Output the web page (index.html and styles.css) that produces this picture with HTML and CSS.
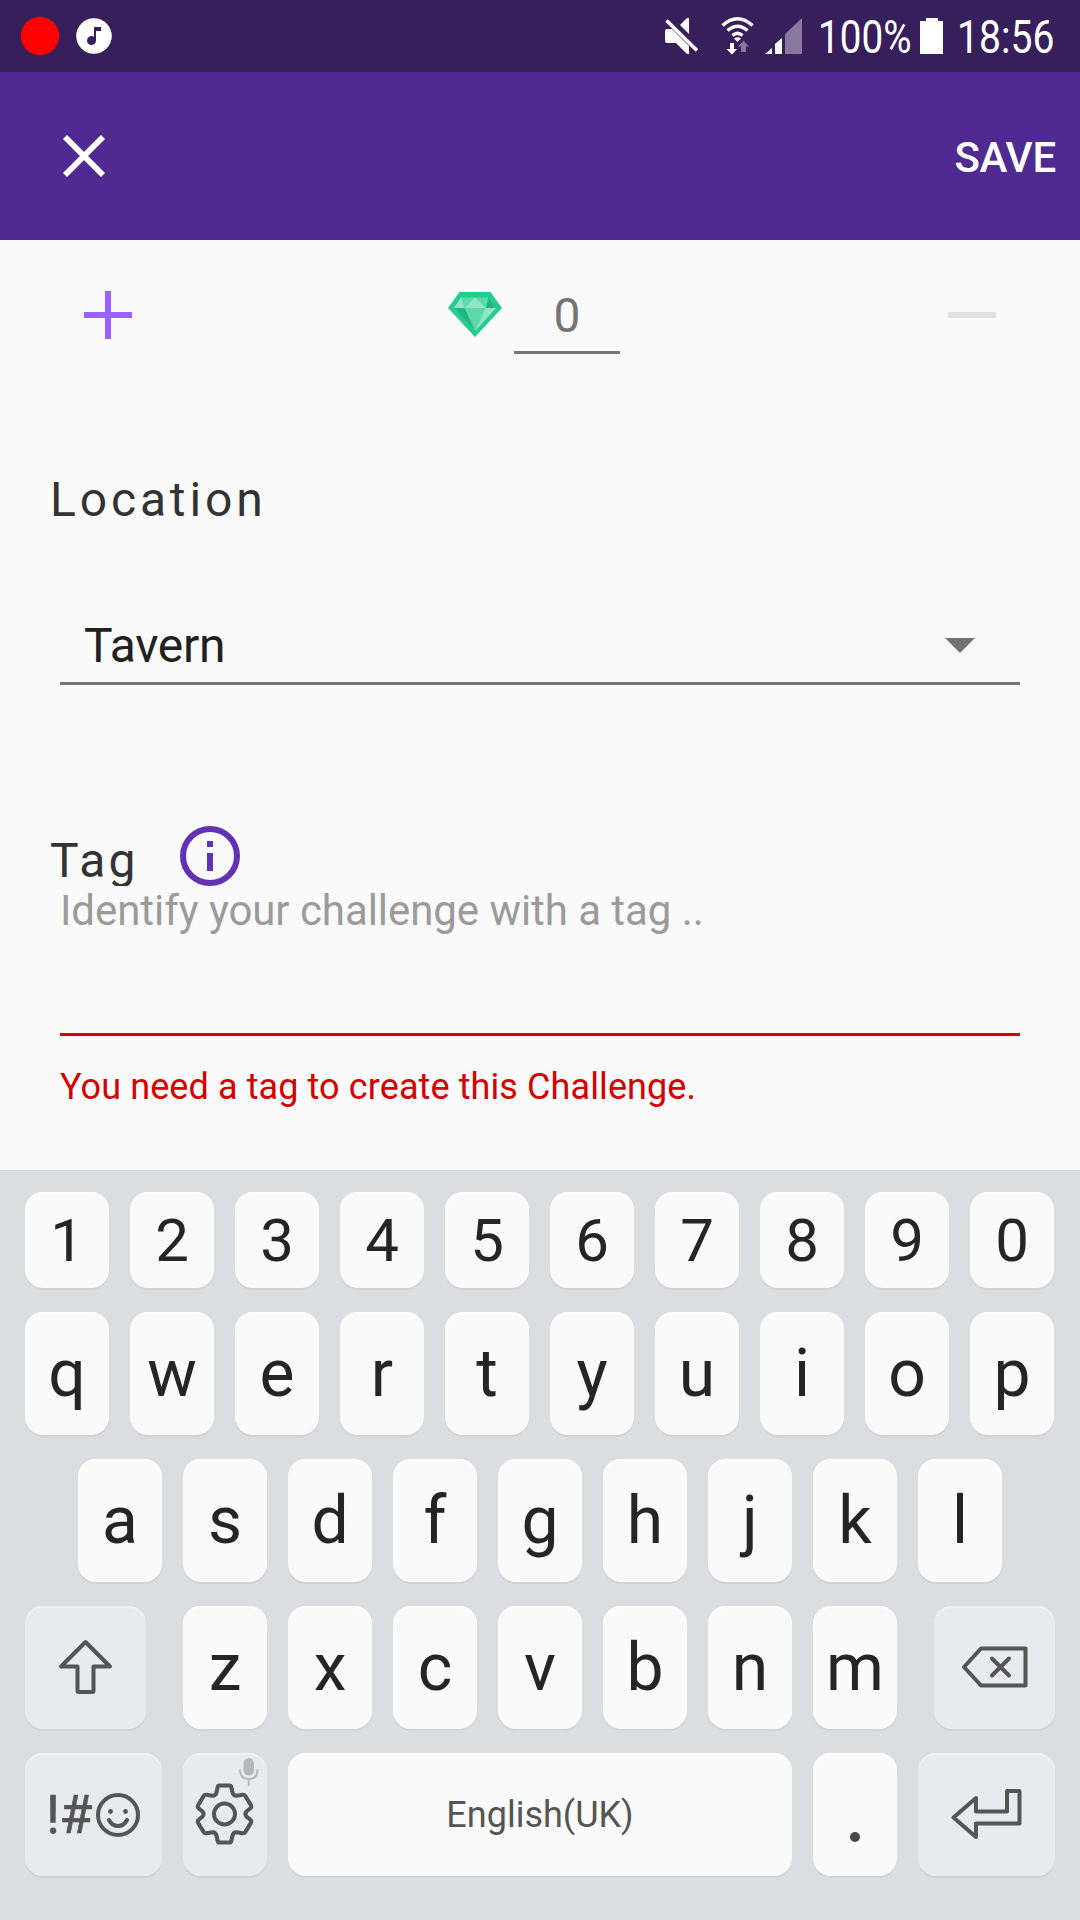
FILE: index.html
```html
<!DOCTYPE html>
<html lang="en">
<head>
<meta charset="utf-8">
<title>Create challenge</title>
<link rel="stylesheet" href="styles.css">
</head>
<body>
<header class="status">
  <svg class="status-left" viewBox="0 0 120 72" width="120" height="72">
    <circle cx="40" cy="36" r="19.2" fill="#f00"/>
    <circle cx="94" cy="36" r="17.8" fill="#fff"/>
    <path d="M94 27h7v4h-5v9.500a4.500 4.500 0 1 1-2-3.700z" fill="#371f5b"/>
  </svg>
  <svg class="status-icons" viewBox="660 0 150 72" width="150" height="72" fill="#fff">
    <path d="M665 31q0-2 2-2h5l17 17v8h-2l-11-11h-9q-2 0-2-2zM680 25l7-7h2v16z"/>
    <path d="M666.500 20.500 697 50.500" stroke="#fff" stroke-width="3.600"/>
    <g fill="none" stroke="#fff" stroke-width="3.400">
      <path d="M722.500 25.500q15-13.500 30 0M727.500 30.500q10-8.500 20 0M732.500 35.500q5-4.500 10 0"/>
    </g>
    <path d="M734 38.500q3.500-2.500 7 0l-3.500 3.500zM730 43h4v6h3l-5 5.500-5.500-5.500h3.500z"/>
    <path d="M741 52h5v-5.500h3l-5.500-5.700-5.500 5.700h3z" fill="#87799d"/>
    <path d="M765 54l7-6v6zM775 54V44l7-6v16z"/>
    <path d="M785 54V34l17-16v36z" fill="#87799d"/>
  </svg>
  <span class="pct"><span class="condensed">100%</span></span>
  <svg class="battery" viewBox="0 0 24 36" width="24" height="36"><path d="M6 0h12v3h5v33H0V3h6z" fill="#fff"/></svg>
  <span class="clock"><span class="condensed">18:56</span></span>
</header>

<nav class="appbar">
  <svg width="42" height="42" viewBox="0 0 42 42"><path d="M2 2l38 38M40 2 2 40" stroke="#fff" stroke-width="5.800"/></svg>
  <span class="save">SAVE</span>
</nav>

<main class="form">
  <section class="prize">
    <svg width="48" height="48" viewBox="0 0 48 48"><path d="M0 21h21V0h6v21h21v6H27v21h-6V27H0z" fill="#9b62ff"/></svg>
    <div class="amount">
      <svg class="gem" width="54" height="45" viewBox="0 0 54 45">
        <path d="M11.500 0h31L54 16 27 45 0 16z" fill="#24cc8f"/>
        <path d="M13 5.500h27.500L48 16 27 39 6 16z" fill="#5bd9ab"/>
        <path d="M13 5.500 6 16h10.500zM27 5.500 16.500 16H38z" fill="#92e5c8"/>
        <path d="M40.500 5.500 48 16H38z" fill="#1fb781"/>
        <path d="M6 16h10.500L27 39z" fill="#1fb781"/>
        <path d="M48 16H38L27 39z" fill="#92e5c8"/>
      </svg>
      <span class="amount-value">0</span>
    </div>
    <svg width="48" height="48" viewBox="0 0 48 48"><path d="M0 21h48v6H0z" fill="#e1e1e3"/></svg>
  </section>

  <h2 class="label location-label">Location</h2>
  <div class="select">
    <span>Tavern</span>
    <svg width="30" height="15" viewBox="0 0 30 15"><path d="M0 0h30L15 15z" fill="#737373"/></svg>
  </div>

  <div class="tag-head">
    <h2 class="label tag-label">Tag</h2>
    <svg width="60" height="60" viewBox="0 0 60 60" fill="#6133b4"><circle cx="30" cy="30" r="27" fill="none" stroke="#6133b4" stroke-width="6"/><path d="M27 15h6v6h-6zM27 27h6v18h-6z"/></svg>
  </div>
  <div class="tag-input">Identify your challenge with a tag ..</div>
  <p class="error">You need a tag to create this Challenge.</p>
</main>

<section class="keyboard">
  <div class="row digits"><b>1</b><b>2</b><b>3</b><b>4</b><b>5</b><b>6</b><b>7</b><b>8</b><b>9</b><b>0</b></div>
  <div class="row"><b>q</b><b>w</b><b>e</b><b>r</b><b>t</b><b>y</b><b>u</b><b>i</b><b>o</b><b>p</b></div>
  <div class="row home"><b>a</b><b>s</b><b>d</b><b>f</b><b>g</b><b>h</b><b>j</b><b>k</b><b>l</b></div>
  <div class="row">
    <b class="fn shift"><svg width="121" height="123" viewBox="0 0 121 123"><path d="M60.500 36 36 60.500h16.500V85q0 1 1 1h14q1 0 1-1V60.500H85z"/></svg></b>
    <b>z</b><b>x</b><b>c</b><b>v</b><b>b</b><b>n</b><b>m</b>
    <b class="fn delete"><svg width="121" height="123" viewBox="0 0 121 123"><path d="M47 42.500h44.500v37H47L30 61z"/><path d="M58 52.500l17 17M75 52.500l-17 17"/></svg></b>
  </div>
  <div class="row">
    <b class="fn wide sym"><span>!#</span><svg width="44" height="44" viewBox="0 0 44 44"><circle cx="22" cy="22" r="20"/><path d="M13 27q3 6 9 6t9-6"/><g fill="#555" stroke="none"><circle cx="14.500" cy="18.500" r="2.400"/><circle cx="29.500" cy="18.500" r="2.400"/></g></svg></b>
    <b class="fn"><svg width="84" height="123" viewBox="0 0 84 123">
      <circle cx="41.500" cy="61" r="10.500"/>
      <path d="M36.500 32.500h10q1.500 0 1.800 1.500l1.200 5.500q.8 3.300 4 3.200l6-1q2-.3 2.800 1.200l5.700 9.500q.8 1.500-.6 2.800l-4 3.400q-2 2.400 0 4.800l4 3.400q1.400 1.300.6 2.800l-5.700 9.500q-.8 1.500-2.800 1.200l-6-1q-3.200-.1-4 3.200L48.300 88q-.3 1.500-1.800 1.500h-10q-1.500 0-1.800-1.500l-1.200-5.500q-.8-3.300-4-3.200l-6 1q-2 .3-2.800-1.200L15 69.600q-.8-1.500.6-2.800l4-3.400q2-2.400 0-4.800l-4-3.400q-1.400-1.300-.6-2.800l5.700-9.500q.8-1.500 2.800-1.200l6 1q3.200.1 4-3.200l1.200-5.500q.3-1.500 1.800-1.500z"/>
      <rect x="60.500" y="5" width="10.500" height="17.500" rx="5.200" fill="#b7b8ba" stroke="none"/>
      <path d="M57 17q0 9 8.700 9t8.700-9M65.700 26v6" style="stroke:#b7b8ba;stroke-width:2"/>
    </svg></b>
    <b class="space">English(UK)</b>
    <b class="period"><i></i></b>
    <b class="fn wide"><svg width="137" height="123" viewBox="0 0 137 123"><path d="M35.500 64.500 58 45v13.500h31V38h12.500v32.500H58V84z"/></svg></b>
  </div>
</section>
</body>
</html>
```

FILE: styles.css
```css
* { box-sizing: border-box; }
body {
  margin: 0;
  width: 1080px;
  height: 1920px;
  overflow: hidden;
  display: flex;
  flex-direction: column;
  background: #fafafa;
  font-family: Roboto, "Liberation Sans", sans-serif;
}
svg { display: block; flex: none; }

.status {
  height: 72px;
  flex: none;
  display: flex;
  background: #371f5b;
  color: #fff;
  font-size: 46px;
  line-height: 75px;
}
.status-icons { margin-left: 540px; }
.condensed { display: inline-block; transform-origin: 0 50%; transform: scaleX(.84); }
.pct { width: 103px; margin-left: 8px; white-space: nowrap; }
.battery { margin: 18px 13px 0 -1px; }
.clock { white-space: nowrap; width: 120px; }
.clock .condensed { transform: scaleX(.85); }

.appbar {
  height: 168px;
  flex: none;
  padding: 0 24px 0 63px;
  display: flex;
  align-items: center;
  justify-content: space-between;
  background: #4f2a91;
  color: #fff;
}
.save { font-size: 42px; font-weight: 500; line-height: 50px; letter-spacing: -.2px; padding-top: 4px; }

.form { height: 930px; flex: none; }
.prize {
  height: 150px;
  padding: 51px 84px 0;
  display: flex;
  justify-content: space-between;
  align-items: flex-start;
}
.amount { display: flex; margin-right: 12px; }
.gem { margin: 1px 12px 0 0; }
.amount-value {
  width: 106px;
  height: 63px;
  line-height: 49px;
  font-size: 48px;
  text-align: center;
  color: #757575;
  border-bottom: 3px solid #757575;
}
.label { margin: 0; font-weight: 400; font-size: 48px; letter-spacing: 3.850px; color: #333; }
.location-label { padding: 82px 0 0 50px; line-height: 56px; }
.select {
  margin: 67px 60px 0;
  height: 90px;
  padding: 14px 45px 0 24px;
  display: flex;
  align-items: center;
  justify-content: space-between;
  border-bottom: 3px solid #757575;
  font-size: 48px;
  letter-spacing: -.3px;
  color: #212121;
}
.tag-head { display: flex; height: 60px; margin: 141px 0 0 50px; align-items: flex-start; }
.tag-label { width: 130px; height: 60px; overflow: hidden; line-height: 70px; letter-spacing: 3.200px; }
.tag-input {
  margin: 0 60px;
  height: 150px;
  border-bottom: 3px solid #d50000;
  font-size: 42px;
  line-height: 49px;
  letter-spacing: -.06px;
  color: #9b9b9b;
}
.error { margin: 30px 60px 0; font-size: 36px; line-height: 42px; letter-spacing: .1px; color: #d50000; }

.keyboard {
  height: 750px;
  flex: none;
  padding: 21px 25px 0;
  background: #dcdde1;
  border-top: 1px solid #d5d6da;
  display: flex;
  flex-direction: column;
  gap: 24px;
}
.row { display: flex; gap: 21px; height: 123px; }
.home { padding-left: 53px; }
.row b {
  width: 84px;
  flex: none;
  display: flex;
  align-items: center;
  justify-content: center;
  border-radius: 18px;
  background: #fafafa;
  box-shadow: 0 2px 0 #d1d2d6, inset 0 2px 1px #fff;
  font-weight: 400;
  font-size: 66px;
  line-height: 78px;
  color: #252525;
}
.digits { height: 96px; }
.row.digits b { font-size: 60px; line-height: 70px; padding-top: 1px; }
.row .fn { width: 121px; background: #e9eaee; box-shadow: 0 2px 0 #d0d1d5, inset 0 2px 1px #f1f2f4; }
.row .fn.wide { width: 137px; }
.row .fn:nth-child(2) { width: 84px; }
.shift { margin-right: 16px; }
.delete { margin-left: 16px; }
.fn svg { fill: none; stroke: #555; stroke-width: 4; stroke-linejoin: round; stroke-linecap: round; }
.row .sym { font-size: 54px; color: #555; }
.row .sym span { letter-spacing: -.5px; -webkit-text-stroke: .6px #555; }
.row .sym svg { margin: 0 1px 0 4px; }
.row .space { width: 504px; font-size: 36px; color: #555; }
.period i { width: 10px; height: 10px; border-radius: 5px; background: #484848; margin-top: 45px; }
```
